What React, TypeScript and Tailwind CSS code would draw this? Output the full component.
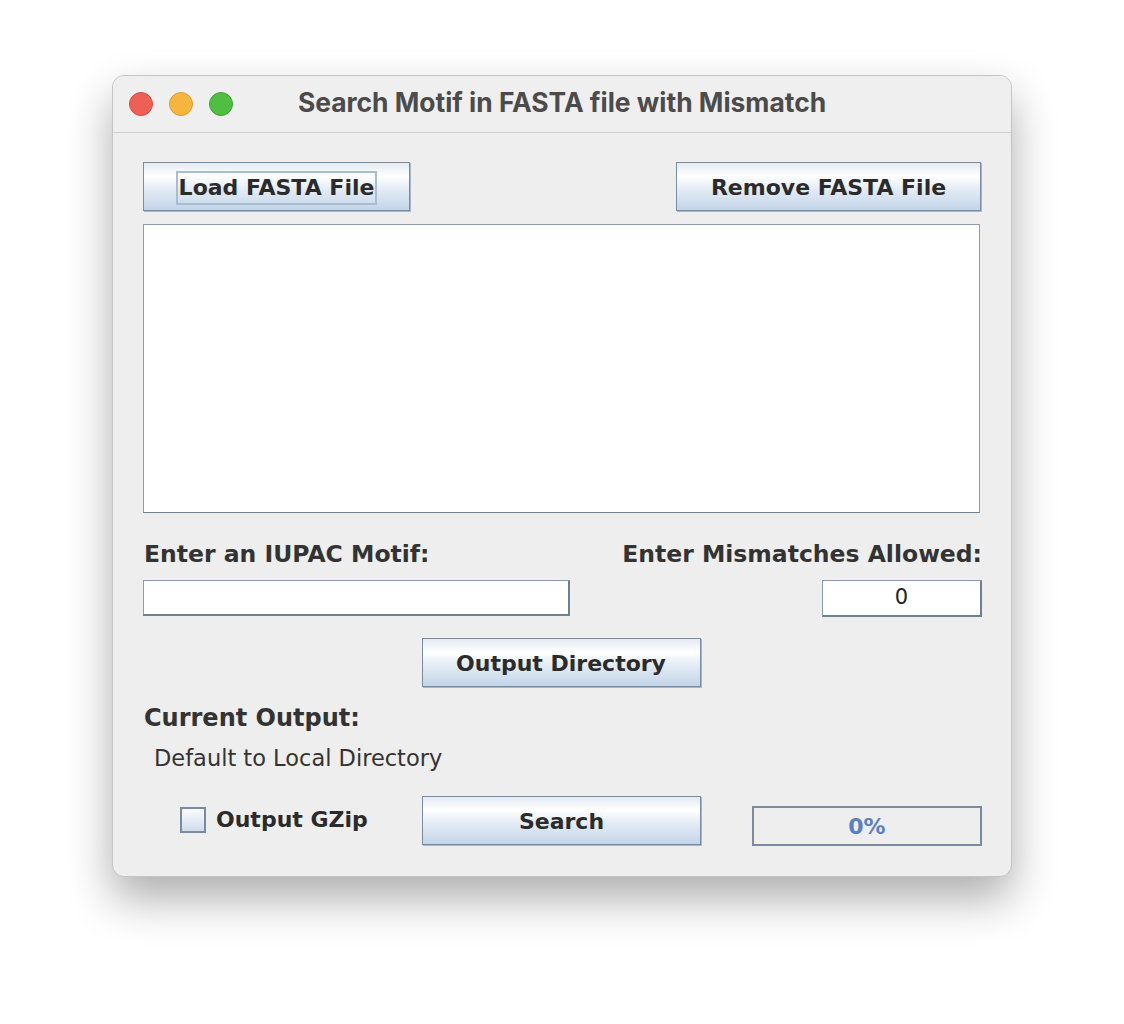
import React from 'react';

const btn =
  'flex items-center justify-center border border-[#7b8b9f] shadow-[1px_1px_0_#a9b6c4] bg-[linear-gradient(to_bottom,#e3eaf2_0%,#ffffff_28%,#e4ecf5_55%,#c3d5e9_100%)] text-[22px] font-bold text-[#2b2b2b] pt-[2px]';

const font = { fontFamily: '"DejaVu Sans", "Liberation Sans", sans-serif' };

const App: React.FC = () => {
  return (
    <div className="w-full h-[1024px] bg-white pt-[75px] pl-[112px]" style={font}>
      <div className="w-[900px] h-[802px] rounded-[12px] border border-[#c4c4c4] bg-[#eeeeee] overflow-hidden shadow-[0_22px_45px_rgba(0,0,0,0.32)]">
        {/* Title bar */}
        <div className="relative h-[57px] bg-[#efefef] border-b border-[#cfcfcf] flex items-center">
          <div className="absolute left-[16px] top-[16px] flex gap-[16px]">
            <span className="w-[24px] h-[24px] rounded-full bg-[#ee5f55] border border-[#d8493f]" />
            <span className="w-[24px] h-[24px] rounded-full bg-[#f6b53c] border border-[#dd9d2b]" />
            <span className="w-[24px] h-[24px] rounded-full bg-[#50bd43] border border-[#3da432]" />
          </div>
          <div
            className="w-full text-center text-[26.4px] font-bold text-[#4b4b4b] pb-[3px]"
            style={{ fontFamily: 'Inter, "Liberation Sans", sans-serif' }}
          >
            Search Motif in FASTA file with Mismatch
          </div>
        </div>

        {/* Content */}
        <div className="pl-[30px] pr-[29px] pt-[29px]">
          <div className="flex justify-between">
            <button className={`${btn} w-[267px] h-[49px]`}>
              <span className="border-2 border-[#a8bdd4] px-[1px] h-[34px] flex items-center">Load FASTA File</span>
            </button>
            <button className={`${btn} w-[305px] h-[49px] mr-[1px]`}>Remove FASTA File</button>
          </div>

          <div className="mt-[13px] w-[837px] h-[289px] bg-white border border-[#8d9cad] border-b-[#6f8093]" />

          <div className="mt-[27px] flex justify-between text-[23.5px] font-bold text-[#333333] leading-[28px]">
            <span className="pl-[1px]">Enter an IUPAC Motif:</span>
            <span>Enter Mismatches Allowed:</span>
          </div>

          <div className="mt-[12px] flex justify-between">
            <div className="w-[427px] h-[36px] bg-white border border-[#8d9cad] border-r-2 border-b-2 border-r-[#6f8093] border-b-[#6f8093]" />
            <div className="w-[160px] h-[37px] bg-white border border-[#8d9cad] border-r-2 border-b-2 border-r-[#6f8093] border-b-[#6f8093] flex items-center justify-center text-[21px] text-[#222222]">
              0
            </div>
          </div>

          <div className="mt-[21px] flex justify-center pr-[3px]">
            <button className={`${btn} w-[279px] h-[49px]`}>Output Directory</button>
          </div>

          <div className="mt-[17px] text-[24px] font-bold text-[#333333] leading-[28px] pl-[1px]">Current Output:</div>
          <div className="mt-[12px] text-[22.5px] text-[#333333] leading-[28px] pl-[11px]">Default to Local Directory</div>

          <div className="mt-[24px] flex items-start">
            <div className="mt-[7px] ml-[37px] w-[243px] flex items-center gap-[10px]">
              <span className="w-[26px] h-[26px] border-2 border-[#7b8b9f] bg-[linear-gradient(to_bottom,#fafcfe,#cfdcea)]" />
              <span className="text-[22px] font-bold text-[#2b2b2b]">Output GZip</span>
            </div>
            <button className={`${btn} w-[279px] h-[49px]`}>Search</button>
            <div className="ml-[51px] mt-[10px] w-[231px] h-[40px] border-2 border-[#7b8b9f] flex items-center justify-center text-[22px] font-bold text-[#5a7fc2]">
              0%
            </div>
          </div>
        </div>
      </div>
    </div>
  );
};

export default App;
